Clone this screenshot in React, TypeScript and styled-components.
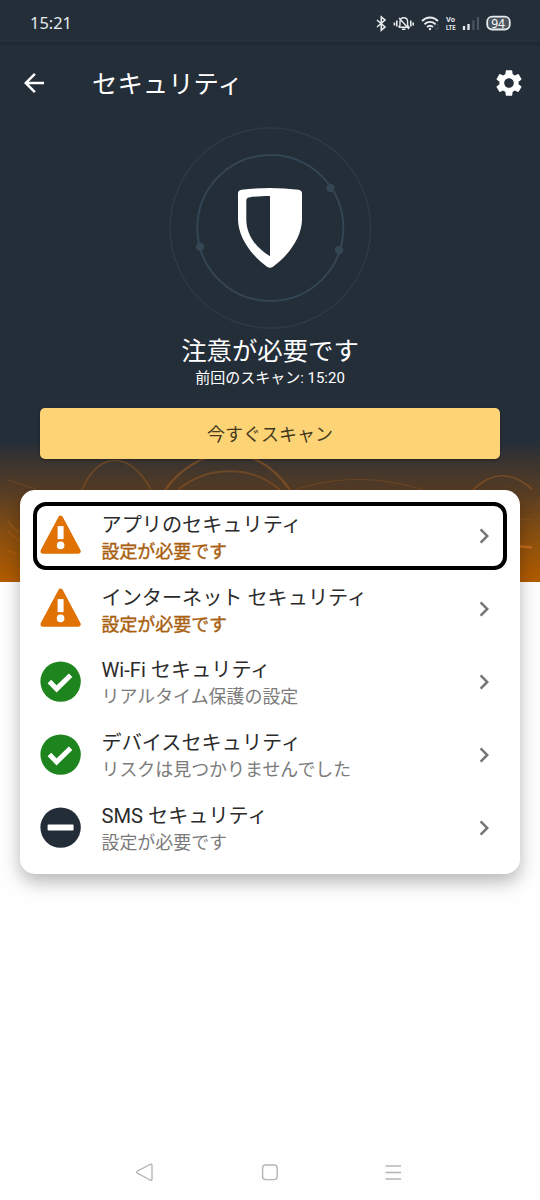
import React from "react";
import styled, { createGlobalStyle } from "styled-components";
import { MdArrowBack, MdChevronRight, MdSettings } from "react-icons/md";

const GlobalStyle = createGlobalStyle`
  * { box-sizing: border-box; }
  body {
    margin: 0;
    background: #fefefe;
    font-family: Roboto, "Noto Sans CJK JP", sans-serif;
  }
`;

const Screen = styled.div`
  display: flex;
  flex-direction: column;
  width: 540px;
  height: 1200px;
  overflow: hidden;
  background: #fefefe;
`;

const Hero = styled.header`
  position: relative;
  display: flex;
  flex-direction: column;
  align-items: center;
  flex: none;
  height: 582px;
  color: #fff;
  background: linear-gradient(#242e39 0 440px, #3b342f 462px, #553c25 490px, #8b500f 537px, #b35c00 582px);
`;

const Waves = styled.svg`
  position: absolute;
  left: 0;
  top: 440px;
`;

const StatusBar = styled.div`
  display: flex;
  align-items: center;
  justify-content: space-between;
  width: 100%;
  height: 45px;
  padding: 4px 28px 0 30px;
  border-bottom: 3px solid #1f2933;
`;

const Clock = styled.span`
  font: 400 16.4px/20px "Noto Sans", sans-serif;
  color: #e8ebed;
`;

const StatusIcons = styled.svg`
  display: block;
`;

const AppBar = styled.div`
  display: flex;
  align-items: center;
  width: 100%;
  height: 75px;
  padding: 0 15px 0 19px;
`;

const Title = styled.h1`
  flex: 1;
  margin: 3px 0 0 43px;
  font-size: 25.4px;
  line-height: 36px;
  font-weight: 400;
`;

const Emblem = styled.svg`
  display: block;
  margin-top: 6px;
`;

const Status = styled.div`
  margin-top: 2px;
  font-size: 25.4px;
  line-height: 38px;
`;

const LastScan = styled.div`
  font-size: 15px;
  line-height: 22px;
  margin-top: -3px;
`;

const ScanButton = styled.button`
  position: relative;
  width: 460px;
  height: 51px;
  margin-top: 19px;
  padding: 2px 0 0;
  border: 0;
  border-radius: 5px;
  background: #fdd475;
  color: #45391d;
  font: 400 18px/24px Roboto, "Noto Sans CJK JP", sans-serif;
  box-shadow: 0 1px 3px rgba(0, 0, 0, 0.35);
`;

const Card = styled.main`
  position: relative;
  flex: none;
  width: 500px;
  height: 384px;
  margin: -92px auto 0;
  padding: 10px 20px 9px;
  border-radius: 15px;
  background: #fff;
  box-shadow: 0 8px 18px rgba(0, 0, 0, 0.28);
`;

const Row = styled.div`
  position: relative;
  display: flex;
  align-items: center;
  height: 72.8px;
`;

const FocusFrame = styled.div`
  position: absolute;
  inset: 2px -7px 3px;
  border: 4px solid #000;
  border-radius: 13px;
`;

const Labels = styled.div`
  flex: 1;
  margin-left: 19.5px;
`;

const Name = styled.div`
  margin-top: 3px;
  font-size: 20.15px;
  line-height: 27px;
  color: #2b2b2b;
`;

const Detail = styled.div<{ $alert?: boolean }>`
  font-size: 17.95px;
  line-height: 25px;
  -webkit-text-stroke: ${(p) => (p.$alert ? "0.4px currentColor" : "0")};
  color: ${(p) => (p.$alert ? "#a9600f" : "#7b7b7b")};
`;

const Chevron = styled(MdChevronRight)`
  margin-right: 1.5px;
  color: #757575;
`;

const NavBar = styled.nav`
  display: flex;
  justify-content: center;
  margin-top: auto;
  padding: 0 2px 14px 0;
`;

type Kind = "warn" | "ok" | "off";

const StateIcon = ({ kind }: { kind: Kind }) => (
  <svg width="42" height="42" viewBox="0.4 0.4 42 42">
    {kind === "warn" && (
      <>
        <path d="M21 3.6 38.6 36.6H3.4Z" fill="#e07204" stroke="#e07204" strokeWidth="5" strokeLinejoin="round" />
        <rect x="18" y="11.5" width="6" height="13" fill="#fff" />
        <circle cx="21" cy="30.8" r="3.8" fill="#fff" />
      </>
    )}
    {kind === "ok" && (
      <>
        <circle cx="21" cy="21" r="20.2" fill="#1e841e" />
        <path d="m9.8 21 7.2 7.3 14-13.6" fill="none" stroke="#fff" strokeWidth="5" />
      </>
    )}
    {kind === "off" && (
      <>
        <circle cx="21" cy="21" r="20.2" fill="#232d38" />
        <rect x="8" y="18" width="26" height="6" rx="1" fill="#fff" />
      </>
    )}
  </svg>
);

const rows: { name: string; detail: string; kind: Kind; framed?: boolean }[] = [
  { name: "アプリのセキュリティ", detail: "設定が必要です", kind: "warn", framed: true },
  { name: "インターネット セキュリティ", detail: "設定が必要です", kind: "warn" },
  { name: "Wi-Fi セキュリティ", detail: "リアルタイム保護の設定", kind: "ok" },
  { name: "デバイスセキュリティ", detail: "リスクは見つかりませんでした", kind: "ok" },
  { name: "SMS セキュリティ", detail: "設定が必要です", kind: "off" },
];

export default function App() {
  return (
    <Screen>
      <GlobalStyle />
      <Hero>
        <Waves width="540" height="142" viewBox="0 440 540 142" fill="none" stroke="#c56c1d" strokeWidth="1.8">
          <path d="M82 490C98 451 130 450 151 490" opacity=".3" />
          <path d="M165 490C194 449 252 435 290 490" opacity=".38" strokeWidth="2.2" />
          <path d="M178 490C206 466 251 464 280 490" opacity=".32" />
          <path d="M295 490C333 476 381 476 423 490" opacity=".25" strokeWidth="1" />
          <path d="M473 490C492 471 511 471 532 489" opacity=".35" />
          <path d="M8 480 36 489M520 519 532 520" opacity=".25" strokeWidth="1" />
          <path d="M8 521C12 528 16 531 22 534M8 531 22 543M8 551 22 555" opacity=".3" />
          <path d="M518 546 532 547.5" opacity=".9" strokeWidth="2.4" />
        </Waves>
        <StatusBar>
          <Clock>15:21</Clock>
          <StatusIcons width="138" height="20" viewBox="374 13 138 20" fill="none" stroke="#e8ebed" strokeWidth="1.6">
            <path d="m377 20 8 7-3.7 3.2V17l3.7 3-8 7" />
            <path d="M398.7 27.3h10.2l-1.3-2.2v-3.4c0-2.3-1.6-4-3.8-4s-3.8 1.7-3.8 4v3.4l-1.3 2.2M402 29.2h3.5M399 18l10 11" strokeWidth="1.4" />
            <path d="M396.8 20.5v6M394.4 22.5v3M410.8 20.5v6M413.2 22.5v3" />
            <path d="M422 21c4.7-4.7 11.3-4.7 16 0M424.5 24.2c3.3-3 7.7-3 11 0M427 27c1.8-1.6 4.2-1.6 6 0" strokeWidth="1.9" />
            <circle cx="430" cy="29" r="1.2" fill="#e8ebed" stroke="none" />
            <path d="m434.8 26 1.9-2 1.9 2m-3.8 1.5 1.9 2 1.9-2" stroke="#53606b" strokeWidth="1" />
            <g fill="#e8ebed" stroke="none" fontFamily="Roboto, sans-serif" fontWeight="700">
              <text x="446" y="22.3" fontSize="7.3" textLength="9" lengthAdjust="spacingAndGlyphs">Vo</text>
              <text x="446" y="30" fontSize="7.3" textLength="9.5" lengthAdjust="spacingAndGlyphs">LTE</text>
            </g>
            <path d="M464 26v4M468.5 24v6" strokeWidth="2.3" />
            <path d="M473.4 20.5V30M478 17v13" stroke="#4b5862" strokeWidth="2" />
            <rect x="487.2" y="16.7" width="22.6" height="12.8" rx="5" fill="#4c5660" strokeWidth="1.8" />
            <text x="491.2" y="27.5" fontSize="12.2" fontFamily="Noto Sans, sans-serif" fill="#fff" stroke="none" textLength="13.8" lengthAdjust="spacingAndGlyphs">94</text>
          </StatusIcons>
        </StatusBar>
        <AppBar>
          <MdArrowBack size={30} />
          <Title>セキュリティ</Title>
          <MdSettings size={32} />
        </AppBar>
        <Emblem width="204" height="204" viewBox="168 126 204 204" fill="none">
          <circle cx="270.3" cy="228" r="100.2" stroke="#2e3c47" strokeWidth="1.3" />
          <circle cx="270.3" cy="228" r="73" stroke="#344654" strokeWidth="2" />
          <g fill="#344654">
            <circle cx="330.5" cy="188" r="4.2" />
            <circle cx="339" cy="250" r="4.2" />
            <circle cx="200" cy="246.7" r="4.2" />
          </g>
          <path fillRule="evenodd" fill="#fff" d="M241.5 189.7Q270 186.5 298.5 189.7Q302 190.3 302 193.5V219C302 237 289 255 273 266.7Q270 268.8 267 266.7C251 255 238 237 238 219V193.5Q238 190.3 241.5 189.7ZM270 196C262 196 255 196.5 249 197.4Q246.3 197.8 246.3 200.5V219C246.3 235 256 248 270 256.2Z" />
        </Emblem>
        <Status>注意が必要です</Status>
        <LastScan>前回のスキャン: 15:20</LastScan>
        <ScanButton>今すぐスキャン</ScanButton>
      </Hero>
      <Card>
        {rows.map((row) => (
          <Row key={row.name}>
            {row.framed && <FocusFrame />}
            <StateIcon kind={row.kind} />
            <Labels>
              <Name>{row.name}</Name>
              <Detail $alert={row.kind === "warn"}>{row.detail}</Detail>
            </Labels>
            <Chevron size={30} />
          </Row>
        ))}
      </Card>
      <NavBar>
        <svg width="270" height="28" viewBox="134 1158 270 28" fill="none" stroke="#b5b5b5" strokeWidth="1.4" strokeLinejoin="round">
          <path d="M137.3 1171.2 150 1164.5Q152 1163.7 152 1165.5V1179Q152 1181 150 1180L137.3 1173.2Q136.2 1172.2 137.3 1171.2Z" />
          <rect x="262.6" y="1165" width="14.6" height="14.6" rx="3" />
          <path d="M385.5 1166h15.5M385.5 1172.5h15.5M385.5 1179h15.5" />
        </svg>
      </NavBar>
    </Screen>
  );
}
